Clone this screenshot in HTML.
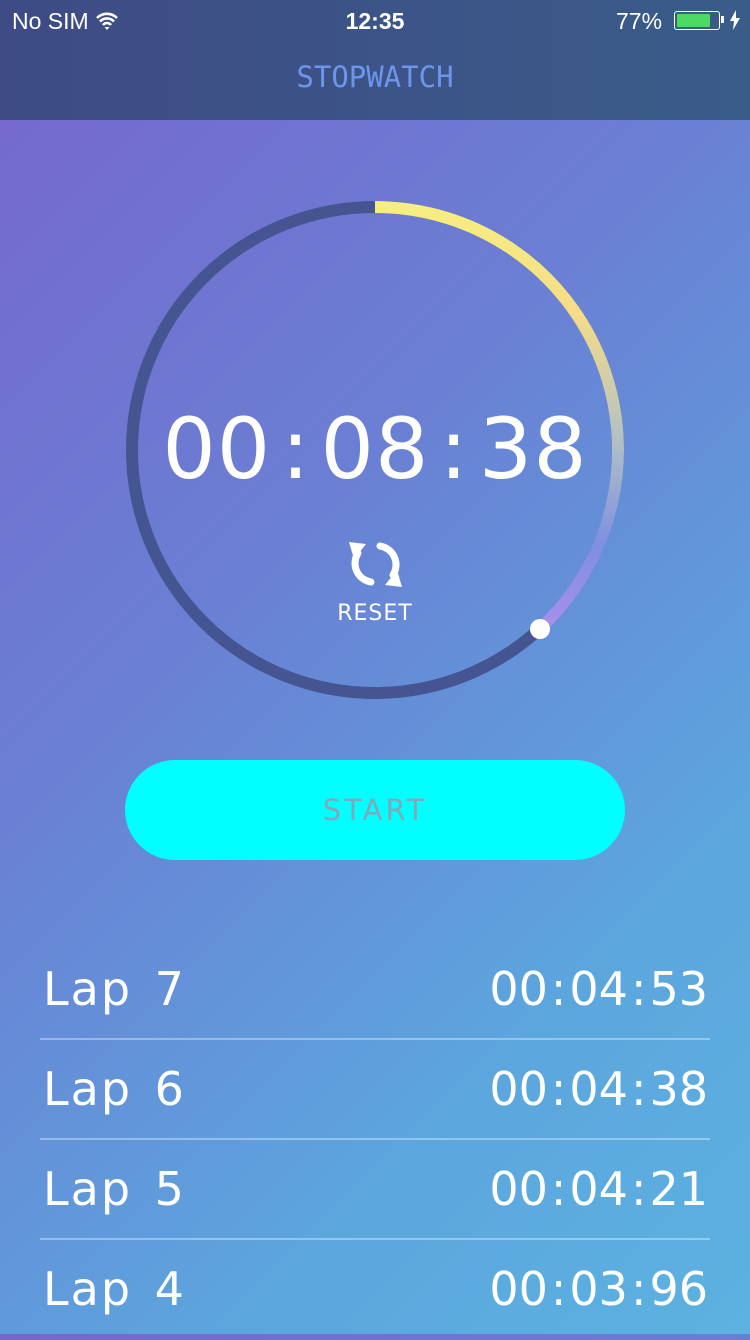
<!DOCTYPE html>
<html><head><meta charset="utf-8"><style>
body{margin:0;width:750px;height:1334px;overflow:hidden;font-family:"DejaVu Sans","Liberation Sans",sans-serif;background:linear-gradient(135deg,#7766cc 0%,#6a80d4 40%,#5ca6de 75%,#5cb2e0 100%);position:relative;color:#fff}
.hdr{position:absolute;left:0;top:0;width:750px;height:120px;background:linear-gradient(90deg,#3e4b85,#3a5c89)}
.sb{position:absolute;top:8px;font-family:"Liberation Sans",sans-serif;font-size:23px}
.title{position:absolute;top:60px;width:750px;text-align:center;font-family:"DejaVu Sans Mono","Liberation Mono",monospace;font-size:29px;color:#6d95ec}
.time{position:absolute;top:400px;width:750px;text-align:center;font-size:84px;letter-spacing:1px}
.time i,.lap i{font-style:normal;margin:0 10px}
.reset{position:absolute;top:601px;width:750px;text-align:center;font-size:22px;letter-spacing:1px}
.btn{position:absolute;left:125px;top:760px;width:500px;height:100px;border-radius:50px;background:#00ffff;text-align:center;line-height:100px;font-size:29px;letter-spacing:3px;color:#7fa8b8}
.lap{position:absolute;left:40px;width:670px;height:100px;font-size:46px}
.lap span{position:absolute;top:22px}
.lap .l{left:3px;letter-spacing:2px;word-spacing:6px}.lap .r{right:2px;letter-spacing:0}
.lap i{margin:0 3px}
.line{position:absolute;left:40px;width:670px;height:2px;background:rgba(255,255,255,.35)}
</style></head><body>
<div class="hdr"></div>
<div class="sb" style="left:12px">No SIM <svg width="24" height="18" viewBox="0 0 24 18" style="vertical-align:-1px"><path d="M2 6a14 14 0 0 1 20 0M5 9.5a9.5 9.5 0 0 1 14 0M8 13a5 5 0 0 1 8 0" stroke="#fff" stroke-width="2.6" fill="none"/><path d="M9.5 15l2.5 3 2.5-3z" fill="#fff"/></svg></div>
<div class="sb" style="left:0;width:750px;text-align:center;font-weight:bold">12:35</div>
<div class="sb" style="left:616px">77%</div>
<div style="position:absolute;left:674px;top:11px;width:44px;height:17px;border:1.5px solid #fff;border-radius:3px"><div style="margin:2px;width:33px;height:13px;background:#4cd964;border-radius:1px"></div></div>
<div style="position:absolute;left:721px;top:16px;width:3px;height:7px;background:#fff"></div>
<svg style="position:absolute;left:729px;top:10px" width="12" height="20" viewBox="0 0 12 20"><path d="M7 0L1 11h4l-1 9 7-12H7z" fill="#fff"/></svg>
<div class="title">STOPWATCH</div>
<svg style="position:absolute;left:0;top:0" width="750" height="750">
<defs><linearGradient id="g" gradientUnits="userSpaceOnUse" x1="0" y1="207" x2="0" y2="629"><stop offset="0" stop-color="#f6ee80"/><stop offset=".25" stop-color="#f6dc88"/><stop offset=".55" stop-color="#b3c1c4"/><stop offset=".8" stop-color="#7d8fe2"/><stop offset="1" stop-color="#a98fea"/></linearGradient></defs>
<circle cx="375" cy="450" r="243" fill="none" stroke="#455592" stroke-width="12"/>
<path d="M375 207A243 243 0 0 1 540 628.4" fill="none" stroke="url(#g)" stroke-width="12"/>
<circle cx="540" cy="629" r="10" fill="#fff"/>
<g fill="none" stroke="#fff" stroke-width="7" stroke-linecap="round"><path d="M371 582A19 19 0 0 1 358 553"/><path d="M380 546A19 19 0 0 1 393 575"/></g>
<path d="M349 542l17 2-12 15z M402 587l-17-2 12-15z" fill="#fff"/>
</svg>
<div class="time">00<i>:</i>08<i>:</i>38</div>
<div class="reset">RESET</div>
<div class="btn">START</div>
<div class="lap" style="top:940px"><span class="l">Lap 7</span><span class="r">00<i>:</i>04<i>:</i>53</span></div>
<div class="line" style="top:1038px"></div>
<div class="lap" style="top:1040px"><span class="l">Lap 6</span><span class="r">00<i>:</i>04<i>:</i>38</span></div>
<div class="line" style="top:1138px"></div>
<div class="lap" style="top:1140px"><span class="l">Lap 5</span><span class="r">00<i>:</i>04<i>:</i>21</span></div>
<div class="line" style="top:1238px"></div>
<div class="lap" style="top:1240px"><span class="l">Lap 4</span><span class="r">00<i>:</i>03<i>:</i>96</span></div>
</body></html>
